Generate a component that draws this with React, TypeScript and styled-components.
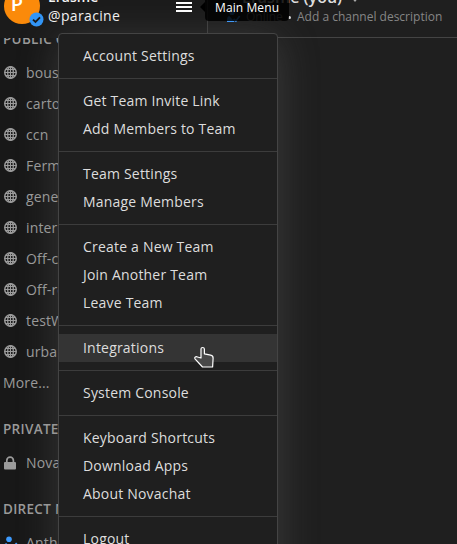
import React from "react";
import styled, { createGlobalStyle } from "styled-components";

const GlobalStyle = createGlobalStyle`
  *, *::before, *::after { box-sizing: border-box; }
  html, body { margin: 0; height: 100%; overflow: hidden; background: #1f1f1f; }
  body { font-family: "Open Sans", "Noto Sans", sans-serif; font-size: 14px; color: #dddddd; }
`;

const Shell = styled.div`
  position: relative;
  display: grid;
  grid-template-columns: 207px 1fr;
  height: 544px;
  overflow: hidden;
`;

const Sidebar = styled.aside`
  min-width: 0;
  background: #181818;
`;

const TeamHeader = styled.header`
  position: relative;
  display: flex;
  height: 38px;
  background: #1b1b1b;
`;

const Avatar = styled.div`
  position: relative;
  flex: none;
  width: 36px;
  height: 36px;
  margin: -12px 0 0 4px;
  padding-right: 10px;
  border-radius: 50%;
  background: #fb8a0a;
  color: #ffffff;
  font: 600 20px/31px "Open Sans", sans-serif;
  text-align: center;
`;

const StatusBadge = styled.svg`
  position: absolute;
  left: 25px;
  top: 24px;
`;

const Identity = styled.div`
  flex: 1;
  margin: -12px 0 0 8px;
  line-height: 18px;
  color: #f4f4f4;
`;

const DisplayName = styled.div`
  font-weight: 600;
  font-size: 14px;
`;

const Handle = styled.div`
  font-size: 14px;
  line-height: 19px;
  letter-spacing: 0.35px;
`;

const MenuButton = styled.div`
  display: flex;
  flex-direction: column;
  gap: 2px;
  width: 16px;
  margin: 2px 15px 0 0;
`;

const Bar = styled.i`
  height: 2px;
  background: #ffffff;
`;

const ChannelList = styled.nav`
  height: 506px;
  overflow: hidden;
  color: #9b9b9b;
  letter-spacing: 0.15px;
`;

const Section = styled.section<{ $offset: number }>`
  margin-top: ${(p) => p.$offset}px;
`;

const SectionTitle = styled.h2`
  margin: 0;
  padding-left: 3px;
  height: 18px;
  font-size: 13.5px;
  line-height: 19px;
  font-weight: 600;
  letter-spacing: 0.3px;
  white-space: nowrap;
  color: #9a9a9a;
`;

const Channel = styled.div`
  display: grid;
  grid-template-columns: 22px 1fr;
  align-items: center;
  height: 31px;
  padding-left: 4px;
  white-space: nowrap;
`;

const More = styled.div`
  height: 31px;
  padding-left: 3px;
  line-height: 31px;
`;

const Main = styled.main`
  min-width: 0;
  border-left: 1px solid #3c3c3c;
  background: #1f1f1f;
`;

const ChannelHeader = styled.header`
  height: 38px;
  border-bottom: 1px solid #444444;
  overflow: hidden;
`;

const ChannelTitle = styled.div`
  display: flex;
  align-items: flex-start;
  gap: 9px;
  margin-top: -13px;
  padding-left: 34px;
  height: 20px;
  font-size: 16px;
  line-height: 20px;
  font-weight: 600;
  color: #dddddd;
  white-space: nowrap;
`;

const Chevron = styled.svg`
  margin-top: 10px;
`;

const ChannelMeta = styled.div`
  display: flex;
  align-items: center;
  height: 18px;
  padding-left: 19px;
  font-size: 12px;
  color: #868686;
  white-space: nowrap;
`;

const Presence = styled.span`
  width: 42px;
  margin-left: 5px;
`;

const Dot = styled.i`
  width: 3px;
  height: 3px;
  margin: 2px 6px 0 0;
  border-radius: 50%;
  background: #dddddd;
`;

const Tooltip = styled.div`
  position: absolute;
  z-index: 3;
  left: 205px;
  top: -6px;
  width: 84px;
  height: 27px;
  padding-left: 10px;
  border-radius: 4px;
  background: rgba(0, 0, 0, 0.85);
  color: #ffffff;
  font: 12px/27px "Open Sans", sans-serif;
  letter-spacing: 0.1px;
  white-space: nowrap;
  &::before {
    content: "";
    position: absolute;
    left: -5px;
    top: 8px;
    border: 5px solid transparent;
    border-left: 0;
    border-right-color: #000000;
  }
`;

const Menu = styled.div`
  position: absolute;
  z-index: 2;
  left: 58px;
  top: 33px;
  width: 220px;
  height: 560px;
  border: 1px solid #444444;
  border-radius: 4px;
  background: #1f1f1f;
  box-shadow: 0 6px 42px rgba(128, 128, 128, 0.3);
`;

const MenuGroup = styled.div`
  padding: 8px 0;
  & + & { border-top: 1px solid #3c3c3c; }
`;

const MenuItem = styled.div<{ $active?: boolean }>`
  height: 28px;
  padding-left: 24px;
  line-height: 28px;
  letter-spacing: 0.2px;
  color: #dddddd;
  background: ${(p) => (p.$active ? "#343434" : "transparent")};
  white-space: nowrap;
`;

const Cursor = styled.svg`
  position: absolute;
  z-index: 4;
  left: 193px;
  top: 346px;
`;

const Globe = () => (
  <svg width="13" height="13" viewBox="0 0 13 13" fill="none" stroke="#9b9b9b" strokeWidth="1.5">
    <circle cx="6.5" cy="6.5" r="5.75" />
    <ellipse cx="6.5" cy="6.5" rx="2.8" ry="5.75" strokeWidth="1.3" />
    <path d="M6.5 .8v11.4M.8 6.5h11.4M1.7 3.5h9.6M1.7 9.5h9.6" strokeWidth="1.1" />
  </svg>
);

const Lock = () => (
  <svg width="13" height="14" viewBox="0 0 13 14">
    <path d="M2.8 7V4.5a3.3 3.3 0 0 1 6.6 0V7" fill="none" stroke="#9b9b9b" strokeWidth="1.7" />
    <rect x="0" y="6" width="12" height="7.5" rx="1" fill="#9b9b9b" />
  </svg>
);

const Person = () => (
  <svg width="14" height="14" viewBox="0 0 14 14">
    <circle cx="5" cy="3.2" r="2.8" fill="#3d9bff" />
    <path d="M0 12c0-3 .5-4.5 2.2-5L5 10l2.4 2.6V13H0z" fill="#3d9bff" />
    <path d="M6.6 9.8l2.3 2.2 3.8-5" fill="none" stroke="#3d9bff" strokeWidth="1.7" />
  </svg>
);

const channels = ["bousole", "cartographie", "ccn", "Fermes", "general", "interop", "Off-col", "Off-reg", "testWeb", "urbanisme"];

const menu = [
  ["Account Settings"],
  ["Get Team Invite Link", "Add Members to Team"],
  ["Team Settings", "Manage Members"],
  ["Create a New Team", "Join Another Team", "Leave Team"],
  ["Integrations"],
  ["System Console"],
  ["Keyboard Shortcuts", "Download Apps", "About Novachat"],
  ["Logout"],
];

export default function App() {
  return (
    <>
      <GlobalStyle />
      <Shell>
        <Sidebar>
          <TeamHeader>
            <Avatar>
              P
              <StatusBadge width="15" height="15" viewBox="0 0 15 15">
                <circle cx="7.5" cy="7.5" r="7" fill="#3296f7" />
                <path d="M4 7.6l2.5 2.3 4.5-4.6" fill="none" stroke="#1b1b1b" strokeWidth="1.9" />
              </StatusBadge>
            </Avatar>
            <Identity>
              <DisplayName>Erasme</DisplayName>
              <Handle>@paracine</Handle>
            </Identity>
            <MenuButton>
              <Bar />
              <Bar />
              <Bar />
            </MenuButton>
          </TeamHeader>
          <ChannelList>
            <Section $offset={-8}>
              <SectionTitle>PUBLIC CHANNELS</SectionTitle>
              <Section $offset={9}>
                {channels.map((name) => (
                  <Channel key={name}>
                    <Globe />
                    {name}
                  </Channel>
                ))}
                <More>More...</More>
              </Section>
            </Section>
            <Section $offset={22}>
              <SectionTitle>PRIVATE CHANNELS</SectionTitle>
              <Section $offset={9}>
                <Channel>
                  <Lock />
                  Novachat
                </Channel>
              </Section>
            </Section>
            <Section $offset={22}>
              <SectionTitle>DIRECT MESSAGES</SectionTitle>
              <Section $offset={9}>
                <Channel>
                  <Person />
                  Anthony
                </Channel>
              </Section>
            </Section>
          </ChannelList>
        </Sidebar>
        <Main>
          <ChannelHeader>
            <ChannelTitle>
              Erasme (you)
              <Chevron width="8" height="5" viewBox="0 0 8 5">
                <path d="M0 0h8L4 5z" fill="#aaaaaa" />
              </Chevron>
            </ChannelTitle>
            <ChannelMeta>
              <Person />
              <Presence>Online</Presence>
              <Dot />
              Add a channel description
            </ChannelMeta>
          </ChannelHeader>
        </Main>
        <Menu>
          {menu.map((group) => (
            <MenuGroup key={group[0]}>
              {group.map((label) => (
                <MenuItem key={label} $active={label === "Integrations"}>
                  {label}
                </MenuItem>
              ))}
            </MenuGroup>
          ))}
        </Menu>
        <Tooltip>Main Menu</Tooltip>
        <Cursor width="22" height="23" viewBox="0 0 22 23">
          <path
            d="M8 12V3c0-2 3.2-2 3.4 0v4.8l6.2 1.4c2 .5 2.6 1.3 2.5 3L19.6 21H9.5L2 12.8c-1-1.4 1-3 2.5-1.8z"
            fill="#484848"
            stroke="#ffffff"
            strokeWidth="1.2"
            strokeLinejoin="round"
          />
        </Cursor>
      </Shell>
    </>
  );
}
